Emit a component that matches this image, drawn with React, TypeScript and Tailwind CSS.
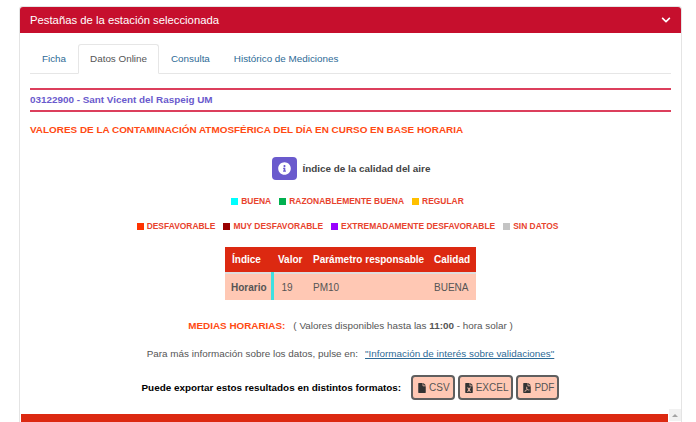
import { FaChevronDown, FaFile, FaFileExcel, FaFilePdf, FaInfoCircle } from "react-icons/fa";

const legendTop = [
  { label: "BUENA", color: "bg-[#00ffff]" },
  { label: "RAZONABLEMENTE BUENA", color: "bg-[#00b050]" },
  { label: "REGULAR", color: "bg-[#ffc000]" },
];

const legendBottom = [
  { label: "DESFAVORABLE", color: "bg-[#ff3300]" },
  { label: "MUY DESFAVORABLE", color: "bg-[#990000]" },
  { label: "EXTREMADAMENTE DESFAVORABLE", color: "bg-[#9900ff]" },
  { label: "SIN DATOS", color: "bg-[#c4c4c4]" },
];

const tabs = ["Ficha", "Datos Online", "Consulta", "Histórico de Mediciones"];

const LegendRow = ({ items }: { items: { label: string; color: string }[] }) => (
  <div className="flex justify-center gap-[8px] pr-[6px] text-[8.45px] leading-[14px] font-bold text-[#e8432e]">
    {items.map((item) => (
      <span key={item.label} className="flex items-center gap-[3px]">
        <span className={`h-[7px] w-[7px] ${item.color}`} />
        {item.label}
      </span>
    ))}
  </div>
);

const ExportButton = ({ icon, label }: { icon: React.ReactNode; label: string }) => (
  <button
    type="button"
    className="flex h-[25px] items-center gap-[3px] rounded-[4px] border-2 border-[#5f5f5f] bg-[#ffc8b4] pr-[3px] pl-[5px] text-[10px] text-[#555]"
  >
    {icon}
    {label}
  </button>
);

export default function App() {
  return (
    <div className="h-[422px] w-[696px] overflow-hidden bg-white pt-[6px] font-['Liberation_Sans',Arial,sans-serif] text-[#555]">
      <div className="ml-[19px] h-[420px] w-[663px] rounded-t-[3px] border border-[#e4e4e4]">
        <div className="flex h-[26px] items-center justify-between rounded-t-[3px] bg-[#c60f2d] px-[10px] text-[11.3px] text-white">
          <span>Pestañas de la estación seleccionada</span>
          <FaChevronDown className="h-[10px] w-[10px]" />
        </div>

        <div className="px-[10px] pt-[11px]">
          <div className="flex h-[30px] border-b border-[#e6e6e6] text-[9.85px] text-[#2d6a96]">
            {tabs.map((tab) =>
              tab === "Datos Online" ? (
                <span
                  key={tab}
                  className="-mb-px flex h-[30px] items-center rounded-t-[3px] border border-[#e6e6e6] border-b-white bg-white px-[11px] pt-px text-[#555]"
                >
                  {tab}
                </span>
              ) : (
                <span key={tab} className="flex items-center px-[12px] pt-px">
                  {tab}
                </span>
              )
            )}
          </div>

          <div className="mt-[14px] flex h-[24px] items-center border-y-2 border-[#dc3f5c] text-[9.9px] font-bold text-[#6a5acd]">
            03122900 - Sant Vicent del Raspeig UM
          </div>

          <p className="mt-[11px] text-[9.92px] leading-[14px] font-bold text-[#ff4a12]">
            VALORES DE LA CONTAMINACIÓN ATMOSFÉRICA DEL DÍA EN CURSO EN BASE HORARIA
          </p>

          <div className="mt-[20px] flex items-center justify-center gap-[6px] pl-[1px]">
            <span className="flex h-[23px] w-[25px] items-center justify-center rounded-[4px] bg-[#6a5acd]">
              <FaInfoCircle className="h-[13px] w-[13px] text-white" />
            </span>
            <span className="pt-px text-[9.9px] font-bold text-[#444]">Índice de la calidad del aire</span>
          </div>

          <div className="mt-[14px]">
            <LegendRow items={legendTop} />
          </div>
          <div className="mt-[11px]">
            <LegendRow items={legendBottom} />
          </div>

          <div className="mt-[14px] flex justify-center">
            <table className="w-[251px] table-fixed border-collapse text-[10px]">
              <thead>
                <tr className="h-[26px] bg-[#dc2911] text-left font-bold text-white">
                  <th className="w-[47px] pl-[7px]">Índice</th>
                  <th className="w-[41px] pl-[6px]">Valor</th>
                  <th className="w-[121px]">Parámetro responsable</th>
                  <th>Calidad</th>
                </tr>
              </thead>
              <tbody>
                <tr className="h-[27px] border-t-2 border-[#dddddd] bg-[#ffc8b4]">
                  <td className="border-r-[3px] border-r-[#3fe0e0] pl-[6px] font-bold">Horario</td>
                  <td className="pl-[8px]">19</td>
                  <td>PM10</td>
                  <td>BUENA</td>
                </tr>
              </tbody>
            </table>
          </div>

          <p className="mt-[19px] text-center text-[9.9px] leading-[14px]">
            <span className="mr-[8px] font-bold text-[#ff4a12]">MEDIAS HORARIAS:</span>( Valores disponibles hasta las{" "}
            <b>11:00</b> - hora solar )
          </p>

          <p className="mt-[14px] text-center text-[9.88px] leading-[14px]">
            Para más información sobre los datos, pulse en:
            <a href="#" className="ml-[7px] text-[#2d6a96] underline">
              "Información de interés sobre validaciones"
            </a>
          </p>

          <div className="mt-[14px] flex items-center justify-center gap-[10px]">
            <span className="pt-px text-[9.9px] font-bold text-black">Puede exportar estos resultados en distintos formatos:</span>
            <div className="flex gap-[3px]">
              <ExportButton icon={<FaFile className="h-[10px] w-[8px] text-[#333]" />} label="CSV" />
              <ExportButton icon={<FaFileExcel className="h-[10px] w-[8px] text-[#333]" />} label="EXCEL" />
              <ExportButton icon={<FaFilePdf className="h-[10px] w-[8px] text-[#333]" />} label="PDF" />
            </div>
          </div>

          <div className="-mx-[10px] mt-[9px] flex items-start pl-px">
            <div className="mt-[5px] h-[8px] flex-1 bg-[#dc2911]" />
            <div className="ml-px flex h-[12px] w-[12px] items-center justify-center bg-[#f1f1f1]">
              <span className="h-0 w-0 border-x-[3px] border-b-[3px] border-x-transparent border-b-[#a3a3a3]" />
            </div>
          </div>
        </div>
      </div>
    </div>
  );
}
